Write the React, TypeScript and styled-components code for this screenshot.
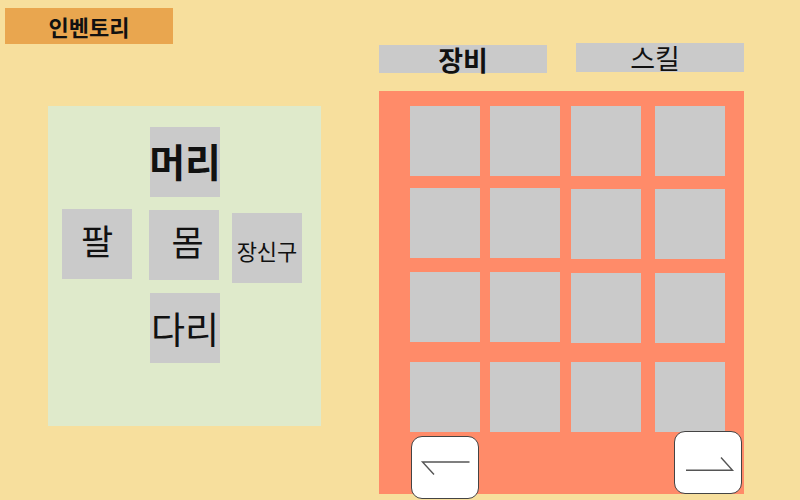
import React from 'react';
import styled, { createGlobalStyle } from 'styled-components';

const GlobalStyle = createGlobalStyle`
    html, body {
        margin: 0;
        padding: 0;
        background: #f7df9d;
        font-family: "Noto Sans CJK KR", "Noto Sans", sans-serif;
        color: #111;
    }
`;

const Page = styled.div`
    width: 800px;
    height: 500px;
    overflow: hidden;
    display: grid;
    grid-template-columns: 379px 1fr;
    background: #f7df9d;
`;

const LeftColumn = styled.div`
    display: flex;
    flex-direction: column;
    align-items: flex-start;
`;

const TitleBox = styled.div`
    margin: 8px 0 0 5px;
    width: 168px;
    height: 36px;
    background: #e9a64f;
    display: flex;
    align-items: center;
    justify-content: center;
    font-size: 22px;
    font-weight: 700;
`;

const BodyPanel = styled.div`
    margin: 62px 0 0 48px;
    width: 273px;
    height: 320px;
    box-sizing: border-box;
    padding: 21px 0 0 14px;
    background: #dfeacb;
    display: grid;
    grid-template-columns: 87px 83px 70px;
    grid-template-rows: 82px 84px 70px;
`;

// $shift > 0 moves the label up, < 0 moves it down
const Slot = styled.div<{ $size: number; $bold?: boolean; $dx?: number; $dy?: number; $pad?: number; $shift?: number; $col: number; $row: number }>`
    grid-column: ${p => p.$col};
    grid-row: ${p => p.$row};
    width: 70px;
    height: 70px;
    box-sizing: border-box;
    padding-left: ${p => p.$pad ?? 0}px;
    padding-bottom: ${p => Math.max(0, (p.$shift ?? 0) * 2)}px;
    padding-top: ${p => Math.max(0, -(p.$shift ?? 0) * 2)}px;
    margin: ${p => p.$dy ?? 0}px 0 0 ${p => p.$dx ?? 0}px;
    background: #cacaca;
    display: flex;
    align-items: center;
    justify-content: center;
    white-space: nowrap;
    font-size: ${p => p.$size}px;
    font-weight: ${p => (p.$bold ? 700 : 400)};
`;

const RightColumn = styled.div`
    padding-top: 43px;
    display: flex;
    flex-direction: column;
    align-items: flex-start;
`;

const TabRow = styled.div`
    display: flex;
    gap: 29px;
    align-items: flex-start;
`;

const Tab = styled.div<{ $active?: boolean }>`
    width: 168px;
    height: ${p => (p.$active ? 28 : 29)}px;
    margin-top: ${p => (p.$active ? 2 : 0)}px;
    box-sizing: border-box;
    padding-right: ${p => (p.$active ? 0 : 10)}px;
    background: #cacaca;
    display: flex;
    align-items: center;
    justify-content: center;
    font-size: 27px;
    font-weight: ${p => (p.$active ? 700 : 400)};
`;

const InventoryPanel = styled.div`
    margin-top: 18px;
    width: 365px;
    height: 403px;
    box-sizing: border-box;
    padding: 15px 0 0 31px;
    background: #ff8b69;
    display: flex;
    flex-direction: column;
`;

const ItemGrid = styled.div`
    display: grid;
    grid-template-columns: 80px 81px 84px 70px;
    grid-template-rows: 82px 84px 90px 70px;
`;

const ItemCell = styled.div<{ $dy?: number }>`
    width: 70px;
    height: 70px;
    margin-top: ${p => p.$dy ?? 0}px;
    background: #cacaca;
`;

const PagerRow = styled.div`
    display: flex;
    justify-content: space-between;
    align-items: flex-start;
    padding-right: 2px;
    margin-left: 1px;
    margin-top: -1px;
`;

const PageButton = styled.button<{ $dy: number }>`
    width: 68px;
    height: 63px;
    margin-top: ${p => p.$dy}px;
    padding: 0;
    box-sizing: border-box;
    background: #fff;
    border: 1.5px solid #444;
    border-radius: 11px;
    display: block;
    cursor: pointer;
`;

const ArrowSvg = styled.svg`
    display: block;
    width: 68px;
    height: 63px;
`;

const ItemRows: number[][] = [
    [0, 0, 0, 0],
    [0, 0, 1, 1],
    [0, 0, 1, 1],
    [0, 0, 0, 0],
];

export default function App() {
    return (
        <>
            <GlobalStyle />
            <Page>
                <LeftColumn>
                    <TitleBox>인벤토리</TitleBox>
                    <BodyPanel>
                        <Slot $col={2} $row={1} $size={39} $bold $dx={1} $shift={2}>머리</Slot>
                        <Slot $col={1} $row={2} $size={35} $shift={5}>팔</Slot>
                        <Slot $col={2} $row={2} $size={35} $dy={1} $pad={7} $shift={5}>몸</Slot>
                        <Slot $col={3} $row={2} $size={22} $dy={4} $shift={-2}>장신구</Slot>
                        <Slot $col={2} $row={3} $size={37} $dx={1}>다리</Slot>
                    </BodyPanel>
                </LeftColumn>

                <RightColumn>
                    <TabRow>
                        <Tab $active>장비</Tab>
                        <Tab>스킬</Tab>
                    </TabRow>
                    <InventoryPanel>
                        <ItemGrid>
                            {ItemRows.map((row, r) => row.map((dy, c) => (
                                <ItemCell key={`${r}-${c}`} $dy={dy} />
                            )))}
                        </ItemGrid>
                        <PagerRow>
                            <PageButton $dy={5} aria-label="이전">
                                <ArrowSvg viewBox="0 0 68 63">
                                    <path d="M57.5 25 H10.5 L22 37.5" fill="none" stroke="#555" strokeWidth="1.4" />
                                </ArrowSvg>
                            </PageButton>
                            <PageButton $dy={0} aria-label="다음">
                                <ArrowSvg viewBox="0 0 68 63">
                                    <path d="M11 38.3 H57.5 L46 25.5" fill="none" stroke="#555" strokeWidth="1.4" />
                                </ArrowSvg>
                            </PageButton>
                        </PagerRow>
                    </InventoryPanel>
                </RightColumn>
            </Page>
        </>
    );
}
